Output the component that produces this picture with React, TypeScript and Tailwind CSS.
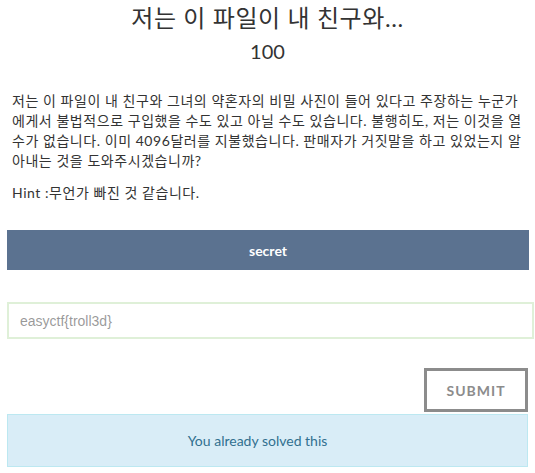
export default function App() {
  return (
    <div
      className="w-[535px] h-[473px] bg-white overflow-hidden text-[#333]"
      style={{ fontFamily: 'Lato, "Noto Sans CJK KR", sans-serif' }}
    >
      {/* Header */}
      <h3 className="text-center text-[24px] leading-[26px] pt-[5px] tracking-[0.6px] text-[#333]">저는 이 파일이 내 친구와...</h3>
      <h4 className="text-center text-[20px] leading-[22px] mt-[9px]">100</h4>

      {/* Description */}
      <div className="pl-[12px] pr-[4px] mt-[29px] text-[14px] leading-[20px] tracking-[0.55px]">
        <p className="mb-[12px]">
          저는 이 파일이 내 친구와 그녀의 약혼자의 비밀 사진이 들어 있다고 주장하는 누군가에게서 불법적으로 구입했을 수도 있고 아닐 수도 있습니다. 불행히도, 저는 이것을 열 수가 없습니다. 이미 4096달러를 지불했습니다. 판매자가 거짓말을 하고 있었는지 알아내는 것을 도와주시겠습니까?
        </p>
        <p>Hint :무언가 빠진 것 같습니다.</p>
      </div>

      <div className="pl-[7px] mt-[27px]">
        {/* File button */}
        <div className="w-[522px] h-[40px] bg-[#5b7290] flex items-center justify-center text-white font-bold text-[14px]">
          secret
        </div>

        {/* Flag input */}
        <input
          className="mt-[32px] w-[527px] h-[37px] border-2 border-[#dff0d8] px-[11px] text-[14px] outline-none block"
          style={{ fontFamily: '"Liberation Sans", Arial, sans-serif' }}
          placeholder="easyctf{troll3d}"
        />

        <div className="flex justify-end w-[521px] mt-[29px]">
          <button className="w-[104px] h-[44px] border-[3px] border-[#8c8c8c] text-[#8c8c8c] font-bold text-[14px] tracking-[1px] bg-white">
            SUBMIT
          </button>
        </div>

        {/* Status */}
        <div className="w-[521px] h-[53px] mt-[2px] bg-[#d9edf7] border border-[#bce8f1] text-[#31708f] text-[14px] flex items-center justify-center pr-[20px]">
          You already solved this
        </div>
      </div>
    </div>
  )
}
